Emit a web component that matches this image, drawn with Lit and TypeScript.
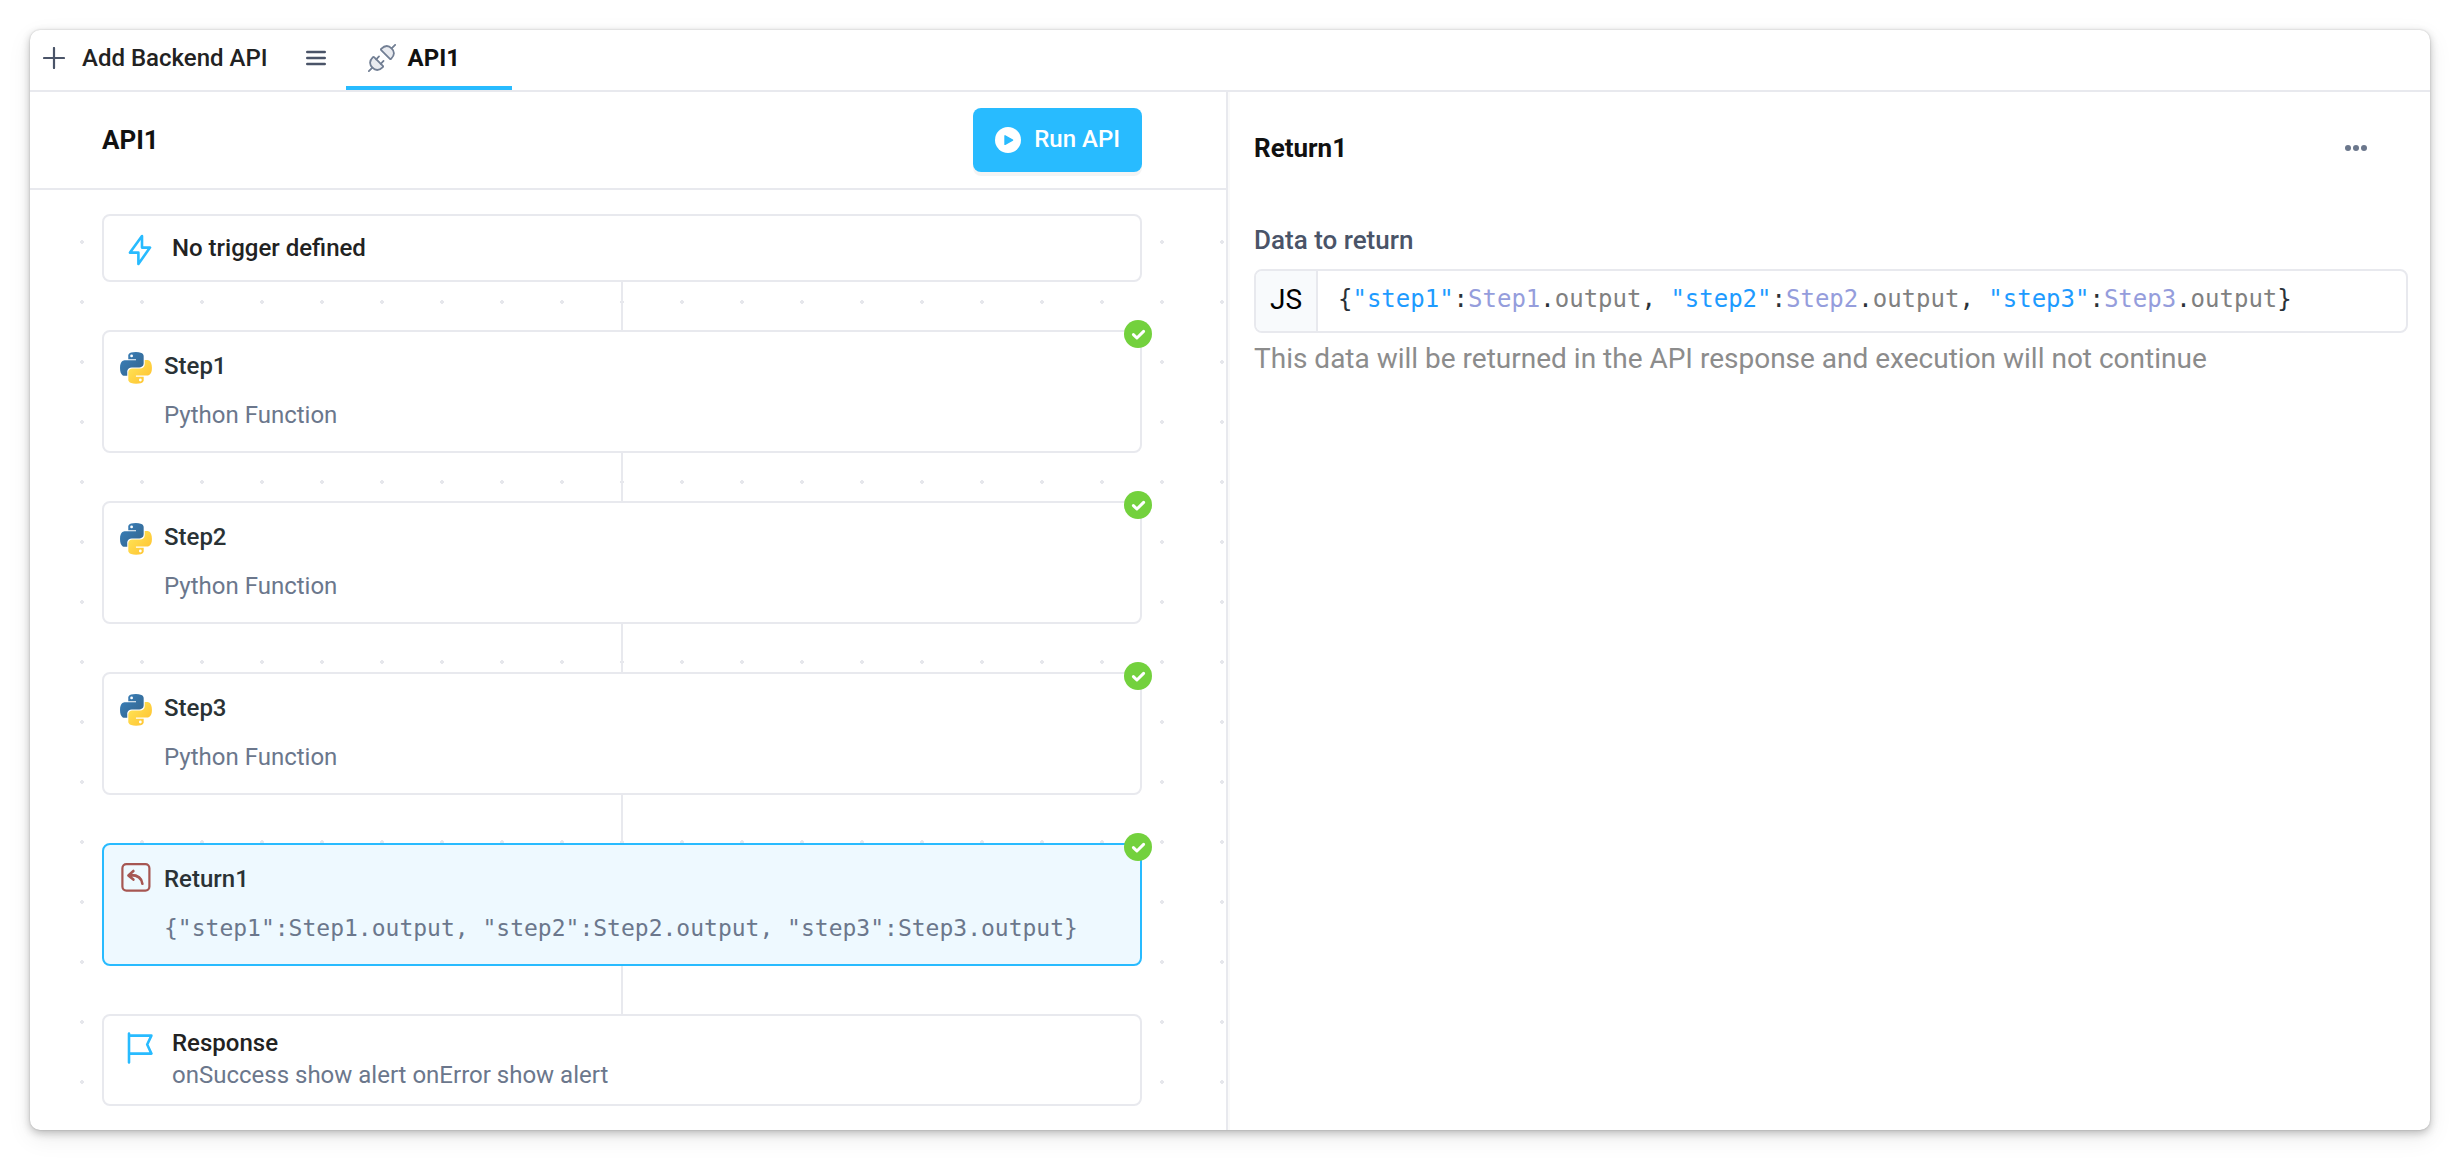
import { LitElement, html, css, svg } from "lit";
import { customElement, property, state } from "lit/decorators.js";
import { classMap } from "lit/directives/class-map.js";

interface Step {
  name: string;
  kind: "python" | "return";
  detail: string;
}

const CODE = '{"step1":Step1.output, "step2":Step2.output, "step3":Step3.output}';

const STEPS: Step[] = [
  { name: "Step1", kind: "python", detail: "Python Function" },
  { name: "Step2", kind: "python", detail: "Python Function" },
  { name: "Step3", kind: "python", detail: "Python Function" },
  { name: "Return1", kind: "return", detail: CODE },
];

const plusIcon = html`<svg width="22" height="22" viewBox="0 0 22 22" aria-hidden="true">
  <path d="M11 1v20M1 11h20" stroke="#4a5468" stroke-width="2.2" stroke-linecap="round" />
</svg>`;

const listIcon = html`<svg width="20" height="16" viewBox="0 0 20 16" aria-hidden="true">
  <path d="M1.3 2h17.4M1.3 8h17.4M1.3 14h17.4" stroke="#4a5468" stroke-width="2.6" stroke-linecap="round" />
</svg>`;

const half = svg`
  <path d="M5 -6.2Q5 -7 5.8 -7C11.6 -7 13.6 -4 13.6 0S11.6 7 5.8 7Q5 7 5 6.2Z" fill="#e9ebf0" />
  <path d="M13.6 0H18.6" stroke-linecap="round" />`;

const plugIcon = html`<svg width="28" height="28" viewBox="0 0 28 28" aria-hidden="true">
  <g transform="translate(14 14) rotate(-45)" fill="none" stroke="#727f94" stroke-width="1.8">
    ${half}
    <g transform="rotate(180)">${half}</g>
    <path d="M-5 -3.2H-1M-5 3.2H-1" stroke-linecap="round" />
  </g>
</svg>`;

const playIcon = html`<svg width="26" height="26" viewBox="0 0 26 26" aria-hidden="true">
  <circle cx="13" cy="13" r="13" fill="#fff" />
  <path d="M10 8.8v8.6l7.6-4.3z" fill="#28bbff" stroke="#28bbff" stroke-width="1.4" stroke-linejoin="round" />
</svg>`;

const boltIcon = html`<svg width="24" height="32" viewBox="0 0 24 32" aria-hidden="true">
  <path d="M14 2L2 18.6H10.4V30L22 13.6H14Z" fill="none" stroke="#28bbff" stroke-width="2.6" stroke-linejoin="round" />
</svg>`;

const flagIcon = html`<svg width="26" height="32" viewBox="0 0 26 32" aria-hidden="true">
  <path d="M2 1.5V30.5M2 3.6H24.4L20.2 12.5L24.4 21.6H2" fill="none" stroke="#28bbff" stroke-width="2.6" stroke-linecap="round" stroke-linejoin="round" />
</svg>`;

const checkIcon = html`<svg width="28" height="28" viewBox="0 0 28 28" aria-label="Succeeded" role="img">
  <circle cx="14" cy="14" r="14" fill="#73d13d" />
  <path d="M9.4 14.6L12.9 18L19.6 11.4" fill="none" stroke="#fff" stroke-width="3" stroke-linecap="round" stroke-linejoin="round" />
</svg>`;

const returnIcon = html`<svg width="32" height="30" viewBox="0 0 32 30" aria-hidden="true">
  <rect x="2.4" y="1.2" width="27" height="26.4" rx="4" fill="none" stroke="#a65652" stroke-width="2.2" />
  <path d="M13.4 8L8.4 12.4L13.4 16.6M8.8 12.2C16.4 11.6 21.6 14.4 22.4 20.8" fill="none" stroke="#a65652" stroke-width="2.6" stroke-linecap="round" stroke-linejoin="round" />
</svg>`;

const moreIcon = html`<svg width="24" height="8" viewBox="0 0 24 8" aria-hidden="true" fill="#6b778c">
  <circle cx="4" cy="4" r="3" /><circle cx="12" cy="4" r="3" /><circle cx="20" cy="4" r="3" />
</svg>`;

@customElement("python-logo")
export class PythonLogo extends LitElement {
  static styles = css`
    :host {
      display: block;
      width: 32px;
      height: 32px;
    }
    .logo {
      display: block;
    }
  `;

  render() {
    return html`<svg class="logo" width="32" height="32" viewBox="0 0 256 255" aria-hidden="true">
      <defs>
        <linearGradient id="blue" x1="13%" y1="12%" x2="80%" y2="78%">
          <stop offset="0" stop-color="#387eb8" />
          <stop offset="1" stop-color="#366994" />
        </linearGradient>
        <linearGradient id="yellow" x1="19%" y1="20%" x2="91%" y2="88%">
          <stop offset="0" stop-color="#ffe052" />
          <stop offset="1" stop-color="#ffc331" />
        </linearGradient>
      </defs>
      <path fill="url(#blue)" d="M126.916.072c-64.832 0-60.784 28.115-60.784 28.115l.072 29.128h61.868v8.745H41.631S.145 61.355.145 126.77c0 65.417 36.21 63.097 36.21 63.097h21.61v-30.356s-1.165-36.21 35.632-36.21h61.362s34.475.557 34.475-33.319V33.97S194.67.072 126.916.072zM92.802 19.66a11.12 11.12 0 0 1 11.13 11.13 11.12 11.12 0 0 1-11.13 11.13 11.12 11.12 0 0 1-11.13-11.13 11.12 11.12 0 0 1 11.13-11.13z" />
      <path fill="url(#yellow)" d="M128.757 254.126c64.832 0 60.784-28.115 60.784-28.115l-.072-29.127H127.6v-8.745h86.441s41.486 4.705 41.486-60.712c0-65.416-36.21-63.096-36.21-63.096h-21.61v30.355s1.165 36.21-35.632 36.21h-61.362s-34.475-.557-34.475 33.32v56.013s-5.235 33.897 62.518 33.897zm34.114-19.586a11.12 11.12 0 0 1-11.13-11.13 11.12 11.12 0 0 1 11.13-11.131 11.12 11.12 0 0 1 11.13 11.13 11.12 11.12 0 0 1-11.13 11.13z" />
    </svg>`;
  }
}

@customElement("code-line")
export class CodeLine extends LitElement {
  @property() code = "";

  static styles = css`
    :host {
      display: block;
      white-space: pre;
      color: #2a3238;
    }
    .str {
      color: #1e9bff;
    }
    .ref {
      color: #959ddc;
    }
    .prop {
      color: #808080;
    }
  `;

  render() {
    const tokens = this.code.match(/"[^"]*"|[A-Z]\w*|\w+|[^\w"]/g) ?? [];
    return tokens.map((t) => {
      const kind = t.startsWith('"') ? "str" : /^[A-Z]/.test(t) ? "ref" : /^\w/.test(t) ? "prop" : "";
      return kind ? html`<span class=${kind}>${t}</span>` : t;
    });
  }
}

@customElement("app-root")
export class AppRoot extends LitElement {
  @state() private selected = "Return1";

  static styles = css`
    :host {
      display: flex;
      box-sizing: border-box;
      min-height: 100vh;
      padding: 30px;
      background: #fff;
      color: #222;
      font: 400 24px/32px Roboto, "Liberation Sans", sans-serif;
    }
    * {
      box-sizing: border-box;
    }
    button {
      margin: 0;
      padding: 0;
      border: 0;
      background: none;
      color: inherit;
      font: inherit;
      text-align: left;
      cursor: pointer;
    }
    h1,
    h2,
    p {
      margin: 0;
    }
    svg {
      display: block;
      flex: none;
    }
    .panel {
      flex: 1;
      min-width: 0;
      display: flex;
      flex-direction: column;
      border-radius: 10px;
      overflow: hidden;
      background: #fff;
      box-shadow: 0 0 2px rgba(0, 0, 0, 0.2), 0 3px 8px rgba(0, 0, 0, 0.24), 0 8px 24px rgba(0, 0, 0, 0.08);
    }
    .tabs {
      display: flex;
      height: 62px;
      border-bottom: 2px solid #e8e9ee;
      font-weight: 500;
    }
    .add,
    .list,
    .tab {
      display: flex;
      align-items: center;
      padding-bottom: 4px;
    }
    .add {
      gap: 17px;
      padding-left: 13px;
      color: #222;
    }
    .list {
      padding-left: 38px;
      padding-right: 20px;
    }
    .tab {
      gap: 12px;
      padding: 0 52px 0 22px;
      border-bottom: 4px solid #28bbff;
      font-weight: 700;
      color: #111;
    }
    .body {
      flex: 1;
      display: grid;
      grid-template-columns: calc(50% - 2px) 1fr;
    }
    .flow {
      display: flex;
      flex-direction: column;
      border-right: 2px solid #e8e9ee;
    }
    .head {
      display: flex;
      align-items: center;
      justify-content: space-between;
      height: 98px;
      padding: 0 84px 0 72px;
      border-bottom: 2px solid #e8e9ee;
    }
    .title {
      font-size: 26px;
      font-weight: 700;
      color: #111;
    }
    .run {
      display: flex;
      align-items: center;
      gap: 13px;
      height: 64px;
      padding: 0 22px;
      border-radius: 8px;
      background: #28bbff;
      box-shadow: 0 4px 0 rgba(0, 0, 0, 0.045);
      color: #fff;
      font-weight: 500;
    }
    .run span {
      padding-bottom: 2px;
    }
    .canvas {
      flex: 1;
      display: flex;
      flex-direction: column;
      align-items: center;
      padding: 24px 84px 24px 72px;
      background: radial-gradient(circle, #e6e7ec 2px, transparent 2px) 22px 22px / 60px 60px;
    }
    .link {
      width: 2px;
      height: 48px;
      background: #e8e9ee;
    }
    .card {
      position: relative;
      width: 100%;
      display: flex;
      align-items: flex-start;
      border: 2px solid #e8e9ee;
      border-radius: 8px;
      background: #fff;
    }
    .end {
      gap: 20px;
      padding: 16px 24px 14px;
      min-height: 68px;
    }
    .end.response {
      gap: 19px;
      padding: 11px 23px;
      min-height: 92px;
    }
    .lines {
      display: flex;
      flex-direction: column;
    }
    .name {
      font-weight: 500;
      color: #222;
    }
    .detail {
      color: #6b778c;
    }
    .step {
      gap: 12px;
      height: 123px;
      padding: 18px 16px;
    }
    .step .lines {
      gap: 17px;
    }
    .step .name {
      color: #2a3235;
    }
    .step.selected {
      border-color: #28bbff;
      background: #eef9ff;
    }
    .mono {
      font-family: "DejaVu Sans Mono", monospace;
      font-size: 23px;
    }
    .badge {
      position: absolute;
      top: -12px;
      right: -12px;
    }
    .icon {
      display: block;
      padding-top: 2px;
    }
    .icon.high {
      padding-top: 0;
    }
    .response .icon {
      padding-top: 5px;
    }
    .props {
      display: flex;
      flex-direction: column;
      padding: 40px 22px 0 26px;
      box-shadow: inset 2px 0 0 #fafafa;
    }
    .props-head {
      display: flex;
      align-items: center;
      justify-content: space-between;
      padding-right: 40px;
      margin-bottom: 60px;
    }
    .label {
      margin-bottom: 13px;
      font-size: 26px;
      font-weight: 500;
      color: #4a5468;
    }
    .field {
      display: flex;
      height: 64px;
      border: 2px solid #e8e9ee;
      border-radius: 8px;
      overflow: hidden;
    }
    .lang {
      display: flex;
      align-items: center;
      justify-content: center;
      width: 62px;
      padding-bottom: 2px;
      border-right: 2px solid #e8e9ee;
      background: #f8fafc;
      color: #000;
      font-size: 28px;
    }
    .editor {
      flex: 1;
      padding: 12px 20px;
      font-family: "DejaVu Sans Mono", monospace;
      outline: none;
    }
    .help {
      padding-top: 10px;
      font-size: 28px;
      color: #8c8c8c;
    }
  `;

  private renderStep(step: Step) {
    const isReturn = step.kind === "return";
    return html`
      <button
        class=${classMap({ card: true, step: true, selected: step.name === this.selected })}
        aria-pressed=${step.name === this.selected}
        @click=${() => (this.selected = step.name)}
      >
        <span class=${classMap({ icon: true, high: isReturn })}>
          ${isReturn ? returnIcon : html`<python-logo></python-logo>`}
        </span>
        <span class="lines">
          <span class="name">${step.name}</span>
          <span class=${classMap({ detail: true, mono: isReturn })}>${step.detail}</span>
        </span>
        <span class="badge">${checkIcon}</span>
      </button>
      <div class="link"></div>
    `;
  }

  render() {
    return html`
      <main class="panel">
        <nav class="tabs">
          <button class="add">${plusIcon}<span>Add Backend API</span></button>
          <button class="list" aria-label="List APIs">${listIcon}</button>
          <button class="tab" aria-current="page">${plugIcon}<span>API1</span></button>
        </nav>
        <div class="body">
          <section class="flow">
            <header class="head">
              <h1 class="title">API1</h1>
              <button class="run">${playIcon}<span>Run API</span></button>
            </header>
            <div class="canvas">
              <button class="card end">
                <span class="icon">${boltIcon}</span>
                <span class="name">No trigger defined</span>
              </button>
              <div class="link"></div>
              ${STEPS.map((s) => this.renderStep(s))}
              <button class="card end response">
                <span class="icon">${flagIcon}</span>
                <span class="lines">
                  <span class="name">Response</span>
                  <span class="detail">onSuccess show alert onError show alert</span>
                </span>
              </button>
            </div>
          </section>
          <section class="props">
            <header class="props-head">
              <h2 class="title">${this.selected}</h2>
              <button aria-label="More actions">${moreIcon}</button>
            </header>
            <div class="label" id="data-label">Data to return</div>
            <div class="field">
              <span class="lang">JS</span>
              <div class="editor" role="textbox" tabindex="0" aria-labelledby="data-label" aria-describedby="data-help">
                <code-line .code=${CODE}></code-line>
              </div>
            </div>
            <p class="help" id="data-help">This data will be returned in the API response and execution will not continue</p>
          </section>
        </div>
      </main>
    `;
  }
}
